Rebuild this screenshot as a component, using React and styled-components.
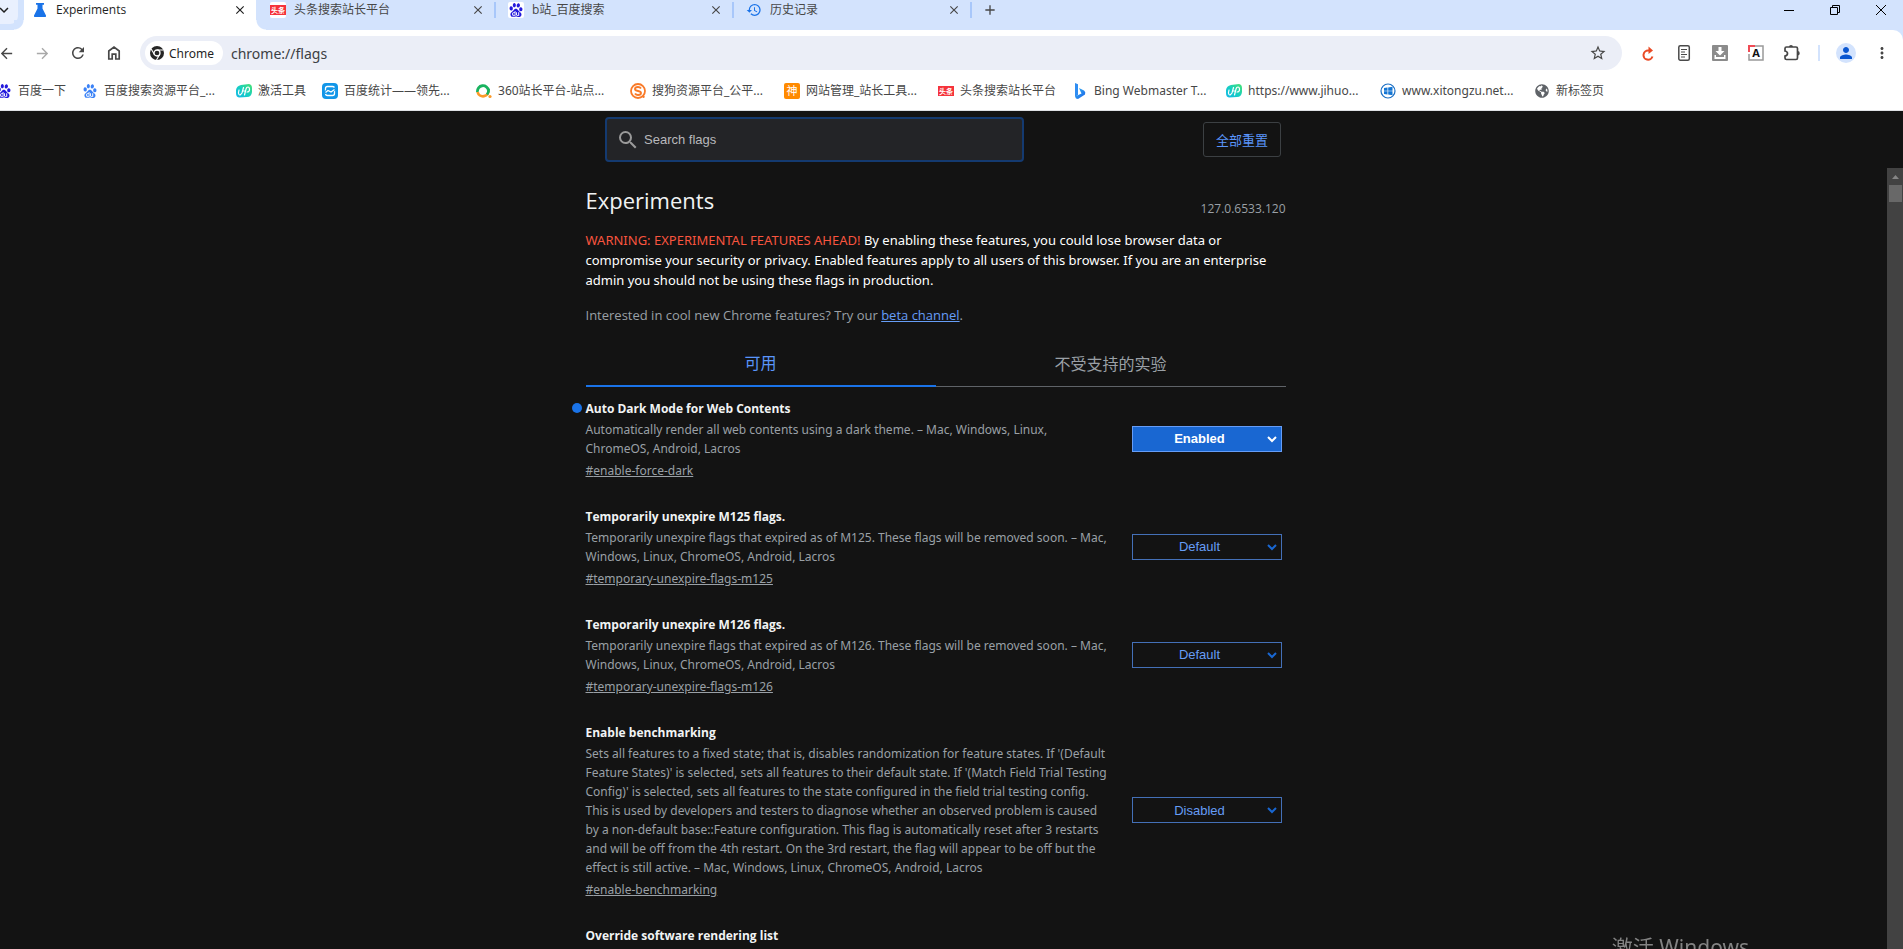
import React, { useState } from 'react';
import styled, { createGlobalStyle } from 'styled-components';
import { SiBaidu } from 'react-icons/si';
import { FaGlobeAmericas } from 'react-icons/fa';
import {
  MdArrowBack,
  MdArrowForward,
  MdClose,
  MdAdd,
  MdHistory,
  MdPerson,
  MdRefresh,
  MdSearch,
  MdStarBorder,
  MdMoreVert,
  MdKeyboardArrowDown,
} from 'react-icons/md';

const colors = {
  strip: '#d3e3fd',
  omnibox: '#ebeef7',
  ink: '#474747',
  page: '#131313',
  text: '#9aa0a6',
  bright: '#ffffff',
  blue: '#1a73e8',
  link: '#669df6',
  warning: '#f9553f',
};

const fonts = {
  body: '"Noto Sans", "Noto Sans CJK SC", sans-serif',
  heading: '"Open Sans", "Noto Sans CJK SC", sans-serif',
  control: '"Liberation Sans", Arial, sans-serif',
};

const GlobalStyle = createGlobalStyle`
  html, body, #root {
    margin: 0;
    padding: 0;
    height: 100%;
  }
  body {
    overflow: hidden;
    background-color: ${colors.page};
    font-family: ${fonts.body};
  }
  *, *::before, *::after {
    box-sizing: border-box;
  }
`

const Browser = styled.div`
  display: flex;
  flex-direction: column;
  height: 100%;
`

/* tab strip */

const TabStrip = styled.div`
  display: flex;
  flex: none;
  height: 30px;
  background-color: ${colors.strip};
  overflow: hidden;
`

const TabSearch = styled.button`
  flex: none;
  width: 18px;
  height: 24px;
  margin-right: 2px;
  padding: 0;
  border: 0;
  border-radius: 0 0 8px 0;
  background-color: #e9f0fe;
  color: #1f1f1f;
  overflow: hidden;
  svg {
    display: block;
    margin: -4px 0 0 -5px;
  }
`

const Tab = styled.div`
  position: relative;
  display: flex;
  flex: none;
  align-items: center;
  width: 238px;
  height: 30px;
  padding: 0 ${props => (props.$active ? '10px' : '0')} 10px 12px;
  color: ${props => (props.$active ? '#1f1f1f' : colors.ink)};
  font-family: ${fonts.heading};
  font-size: 12px;
  line-height: 20px;

  ${props => props.$active && `
    &::before {
      content: '';
      position: absolute;
      inset: 0 2px 0 4px;
      background: #fff;
    }
    &::after {
      content: '';
      position: absolute;
      inset: auto -8px 0 -6px;
      height: 10px;
      background:
        radial-gradient(circle at 0 0, ${colors.strip} 9px, #fff 10px) left / 10px 10px no-repeat,
        radial-gradient(circle at 100% 0, ${colors.strip} 9px, #fff 10px) right / 10px 10px no-repeat;
    }
  `}
  > * {
    position: relative;
    z-index: 1;
  }
`

const TabTitle = styled.span`
  flex: 1;
  margin-left: 8px;
  white-space: nowrap;
`

const Divider = styled.span`
  flex: none;
  width: 2px;
  height: 16px;
  background-color: #a8c7fa;
`

const TabClose = styled.button`
  display: flex;
  flex: none;
  align-items: center;
  justify-content: center;
  width: 16px;
  height: 16px;
  margin-right: ${props => (props.$divided ? '8px' : '0')};
  padding: 0;
  border: 0;
  background: none;
  color: inherit;
`

const NewTab = styled.button`
  display: flex;
  flex: none;
  align-items: center;
  justify-content: center;
  width: 36px;
  height: 20px;
  padding: 0;
  border: 0;
  background: none;
  color: ${colors.ink};
`

const WindowControls = styled.div`
  display: flex;
  margin-left: auto;
  margin-right: -1px;
`

const WindowButton = styled.button`
  width: 46px;
  height: 20px;
  padding: 0;
  border: 0;
  background: none;
  svg {
    display: block;
    margin: 0 auto;
  }
`

/* toolbar */

const ToolbarBack = styled.div`
  flex: none;
  background-color: ${colors.strip};
`

const Toolbar = styled.div`
  display: flex;
  align-items: center;
  height: 46px;
  padding-right: 3px;
  background-color: #fff;
  border-top-right-radius: 10px;
  overflow: hidden;
`

const NavButtons = styled.div`
  display: flex;
  flex: none;
  width: 140px;
`

const ToolButton = styled.button`
  display: flex;
  flex: none;
  align-items: center;
  justify-content: center;
  width: 36px;
  height: 34px;
  padding: 0;
  border: 0;
  background: none;
  color: ${props => (props.$faded ? '#a9a9a9' : colors.ink)};
  &:first-child {
    margin-left: ${props => (props.$edge ? '-12px' : '0')};
  }
`

const Omnibox = styled.div`
  display: flex;
  flex: 1;
  align-items: center;
  height: 34px;
  padding: 0 6px 0 5px;
  border-radius: 17px;
  background-color: ${colors.omnibox};
`

const SiteChip = styled.button`
  display: flex;
  flex: none;
  align-items: center;
  gap: 5px;
  width: 78px;
  height: 24px;
  padding: 0 5px;
  border: 0;
  border-radius: 12px;
  background-color: #fff;
  color: #1f1f1f;
  font: 12px ${fonts.body};
`

const Address = styled.input`
  flex: 1;
  height: 24px;
  margin-left: 8px;
  padding: 0;
  border: 0;
  outline: 0;
  background: none;
  color: #3c4043;
  font: 14px ${fonts.body};
`

const Extensions = styled.div`
  display: flex;
  flex: none;
  align-items: center;
  padding-left: 8px;
`

const ToolDivider = styled.span`
  width: 2px;
  height: 16px;
  margin: 0 8px;
  background-color: ${colors.strip};
`

const Avatar = styled.span`
  display: flex;
  align-items: center;
  justify-content: center;
  width: 20px;
  height: 20px;
  border-radius: 50%;
  background-color: ${colors.strip};
  color: #0b57d0;
`

/* bookmarks */

const Bookmarks = styled.nav`
  display: flex;
  flex: none;
  gap: 16px;
  height: 35px;
  padding-bottom: 5px;
  background-color: #fff;
  border-bottom: 1px solid #dfe1e5;
  overflow: hidden;
`

const Bookmark = styled.a`
  display: flex;
  flex: none;
  align-items: center;
  gap: 6px;
  color: ${colors.ink};
  font-size: 12px;
  line-height: 20px;
  text-decoration: none;
  white-space: nowrap;
  &:first-child {
    margin-left: -4px;
  }
`

const BookmarkIcon = styled.span`
  display: flex;
  align-items: center;
  justify-content: center;
  width: 16px;
  height: 16px;
`

const BookmarkName = styled.span`
  width: ${props => (props.$cut ? '116px' : 'auto')};
`

/* flags page */

const FlagsHeader = styled.header`
  flex: none;
  height: 57px;
  padding-right: 17px;
`

const HeaderInner = styled.div`
  display: flex;
  align-items: center;
  justify-content: space-between;
  max-width: 700px;
  height: 57px;
  margin: 0 auto;
  padding: 0 12px;
`

const SearchBox = styled.label`
  display: flex;
  align-items: center;
  width: 419px;
  height: 45px;
  padding-left: 9px;
  border: 2px solid #143a70;
  border-radius: 4px;
  background-color: #232427;
  color: #9a9a9a;
`

const SearchInput = styled.input`
  flex: 1;
  margin-left: 4px;
  padding: 0;
  border: 0;
  outline: 0;
  background: none;
  color: #fff;
  font: 13px ${fonts.control};
  &::placeholder {
    color: #b8b9bc;
  }
`

const ResetButton = styled.button`
  width: 78px;
  height: 35px;
  padding: 0 0 1px;
  border: 1px solid #3c4043;
  border-radius: 3px;
  background: none;
  color: #5a95fb;
  font: 13px "Noto Sans CJK SC", sans-serif;
`

const ScrollArea = styled.div`
  display: flex;
  flex: 1;
  min-height: 0;
`

const Main = styled.main`
  flex: 1;
  padding: 0 16px 0 0;
  overflow: hidden;
`

const Content = styled.div`
  max-width: 700px;
  margin: 0 auto;
  padding-top: 15px;
`

const TitleRow = styled.div`
  display: flex;
  align-items: flex-end;
  justify-content: space-between;
`

const Title = styled.h1`
  margin: 0;
  color: #f1f3f4;
  font-family: ${fonts.heading};
  font-size: 22px;
  font-weight: 400;
  line-height: 34px;
`

const Version = styled.span`
  color: ${colors.text};
  font-family: ${fonts.heading};
  font-size: 12px;
  line-height: 16px;
`

const Blurb = styled.p`
  margin: 13px 0 15px;
  color: ${props => (props.$dim ? colors.text : colors.bright)};
  font-family: ${props => (props.$dim ? fonts.heading : fonts.body)};
  font-size: 13px;
  line-height: 20px;
`

const Warning = styled.span`
  color: ${colors.warning};
`

const BetaLink = styled.a`
  color: #669df6;
`

const TabList = styled.div`
  display: grid;
  grid-template-columns: 1fr 1fr;
  margin-top: 17px;
`

const FlagTab = styled.button`
  height: 45px;
  padding: 0 0 3px;
  border: 0;
  border-bottom: ${props => (props.$selected ? `2px solid ${colors.blue}` : '1px solid #5f6368')};
  background: none;
  color: ${props => (props.$selected ? '#5a95fb' : colors.text)};
  font: 16px "Noto Sans CJK SC", sans-serif;
`

const Experiment = styled.section`
  display: flex;
  align-items: center;
  justify-content: space-between;
  padding: 12px 4px 15px 0;
`

const ExperimentText = styled.div`
  width: 526px;
  color: ${colors.text};
  font-size: 12px;
  line-height: 19px;
`

const ExperimentName = styled.h2`
  position: relative;
  margin: 0 0 2px;
  color: #f1f3f4;
  font-family: ${fonts.heading};
  font-size: 12px;
  font-weight: 700;
  line-height: 19px;
  ${props => props.$changed && `
    &::before {
      content: '';
      position: absolute;
      top: 4px;
      left: -14px;
      width: 10px;
      height: 10px;
      border-radius: 50%;
      background: ${colors.blue};
    }
  `}
`

const Description = styled.p`
  margin: 0 0 3px;
`

const Permalink = styled.a`
  color: inherit;
`

const SelectWrap = styled.div`
  position: relative;
  flex: none;
  margin-bottom: 2px;
  color: ${props => (props.$changed ? '#fff' : '#1967d2')};
  svg {
    position: absolute;
    top: 10px;
    right: 5px;
    pointer-events: none;
  }
`

const StateSelect = styled.select`
  display: block;
  width: 150px;
  height: 26px;
  padding: 0 14px 0 0;
  appearance: none;
  border: 1px solid ${props => (props.$changed ? colors.link : '#4470b8')};
  border-radius: 0;
  background-color: ${props => (props.$changed ? '#1967d2' : colors.page)};
  color: ${props => (props.$changed ? '#fff' : colors.link)};
  font: ${props => (props.$changed ? '700' : '400')} 13px ${fonts.control};
  text-align: center;
  text-align-last: center;
`

const Scrollbar = styled.div`
  flex: none;
  width: 16px;
  padding: 0 1px 0 2px;
  background-color: #424242;
`

const ScrollUp = styled.div`
  display: flex;
  align-items: center;
  justify-content: center;
  height: 17px;
`

const ScrollThumb = styled.div`
  height: 17px;
  background-color: #686868;
`

const Watermark = styled.div`
  position: fixed;
  right: 154px;
  bottom: -13px;
  color: #838383;
  font-size: 21px;
  line-height: 30px;
  pointer-events: none;
`

/* icons */

const FlaskIcon = () => (
  <svg width="16" height="16" viewBox="0 0 16 16">
    <path fill="#1a73e8" d="M4 1V2.800H5.500V6.500L2 13.500Q1.500 15 3 15H13Q14.500 15 14 13.500L10.500 6.500V2.800H12V1Z" />
  </svg>
)

const ToutiaoIcon = () => (
  <svg width="16" height="16" viewBox="0 0 16 16">
    <rect width="16" height="16" rx="2" fill="#fff" />
    <rect y="3" width="16" height="10" fill="#f5333b" />
    <text x="8" y="11" fill="#fff" fontSize="7" fontWeight="700" textAnchor="middle" fontFamily="Noto Sans CJK SC">头条</text>
  </svg>
)

const BaiduTile = styled.span`
  display: flex;
  align-items: center;
  justify-content: center;
  width: 16px;
  height: 16px;
  border-radius: 2px;
  background: #fff;
`

const LinkBadge = () => (
  <svg width="16" height="16" viewBox="0 0 16 16">
    <defs>
      <linearGradient id="badge" x1="1" y1="0" x2="0" y2="1">
        <stop offset="0" stopColor="#4be36f" />
        <stop offset=".5" stopColor="#16cfc0" />
        <stop offset="1" stopColor="#13b7ea" />
      </linearGradient>
    </defs>
    <path fill="url(#badge)" d="M5 2L13 1Q16 1.500 16 5V9Q15.500 14 11 14L3 14.500Q0 14 0 10V7Q.5 3 5 2Z" />
    <path d="M3 7Q2 10 3 11.500T6 10L7.500 4.500M6.800 8H9.500M8.500 12L10 6Q10.500 4 12 4T13.500 6.500T11 9" fill="none" stroke="#fff" strokeWidth="1.200" strokeLinecap="round" />
  </svg>
)

const TongjiIcon = () => (
  <svg width="16" height="16" viewBox="0 0 16 16">
    <rect width="16" height="16" rx="4" fill="#1296e8" />
    <rect x="3.500" y="3.500" width="9" height="9" rx="2" fill="none" stroke="#fff" strokeWidth="1.300" />
    <path d="M2.500 10L6 7.500L8.500 9L13.500 5.500" fill="none" stroke="#1296e8" strokeWidth="3" />
    <path d="M3.500 9.500L6 7.500L9 9L12.500 6.500" fill="none" stroke="#fff" strokeWidth="1.300" />
  </svg>
)

const SearchRingIcon = () => (
  <svg width="16" height="16" viewBox="0 0 16 16" fill="none">
    <path d="M1.500 9A5.500 5.500 0 1 1 12.500 7.500" stroke="#19b35f" strokeWidth="2.800" />
    <path d="M12.600 7A5.600 5.600 0 0 1 1.600 9" stroke="#fd9a28" strokeWidth="2.800" />
    <path d="M12.600 6Q13 9 11 11.500" stroke="#19b35f" strokeWidth="2.800" />
    <circle cx="14" cy="13.500" r="1.600" fill="#fd9a28" />
  </svg>
)

const SogouIcon = () => (
  <svg width="16" height="16" viewBox="0 0 16 16">
    <circle cx="8" cy="8" r="7" fill="none" stroke="#f97a28" strokeWidth="1.800" />
    <path d="M11 5.500Q10 4 8 4Q5 4 5 6Q5 7.500 8 8T11 10Q11 12 8 12Q6 12 5 10.500" fill="none" stroke="#f97a28" strokeWidth="1.900" />
    <circle cx="13.500" cy="13.800" r="1.200" fill="#f97a28" />
  </svg>
)

const ShenIcon = () => (
  <svg width="16" height="16" viewBox="0 0 16 16">
    <rect width="16" height="16" rx="2" fill="#ff8a00" />
    <text x="8" y="12" fill="#fff" fontSize="11" textAnchor="middle" fontFamily="Noto Sans CJK SC">神</text>
  </svg>
)

const BingIcon = () => (
  <svg width="16" height="16" viewBox="0 0 16 16">
    <defs>
      <linearGradient id="bing" x1="0" y1="0" x2="1" y2="1">
        <stop offset="0" stopColor="#35b8f5" />
        <stop offset="1" stopColor="#1a5ee6" />
      </linearGradient>
    </defs>
    <path fill="#2f8df2" d="M3 0L6 1.300V12L3 14Z" />
    <path fill="url(#bing)" d="M7 5L12 7.500Q14 9 13 11.500L6 16Q3.500 16 3 13.500L9.500 10.500L8.300 8Z" />
  </svg>
)

const WindowsIcon = () => (
  <svg width="16" height="16" viewBox="0 0 16 16">
    <circle cx="8" cy="8" r="7" fill="none" stroke="#1b6fc4" strokeWidth="1.200" />
    <path fill="#1476d4" d="M4 5L7.500 4.500V7.700H4ZM8.200 4.400L12.500 3.800V7.700H8.200ZM4 8.300H7.500V11.500L4 11ZM8.200 8.300H12.500V12.200L8.200 11.600Z" />
  </svg>
)

const ChromeIcon = () => (
  <svg width="14" height="14" viewBox="0 0 14 14">
    <circle cx="7" cy="7" r="7" fill="#262626" />
    <path d="M7 4H13.500M4.400 8.500L1.200 3M9.600 8.500L6.500 14" stroke="#fff" strokeWidth="1.100" />
    <circle cx="7" cy="7" r="3" fill="#262626" stroke="#fff" strokeWidth="1.300" />
  </svg>
)

const HomeIcon = () => (
  <svg width="14" height="16" viewBox="0 0 14 16" fill="none" stroke="currentColor" strokeWidth="1.700">
    <path d="M1.800 14V6L7 2L12.200 6V14H8.800V9.200H5.200V14Z" />
  </svg>
)

const RedoIcon = () => (
  <svg width="16" height="16" viewBox="0 0 16 16" fill="none" stroke="#ea4a25" strokeWidth="2">
    <path d="M12.500 11.500A4.600 4.600 0 1 1 8.500 5.500H10" />
    <path fill="#ea4a25" stroke="none" d="M8.500 1.500L13 5.500L8.500 9Z" />
  </svg>
)

const ReaderIcon = () => (
  <svg width="16" height="16" viewBox="0 0 16 16" fill="none" stroke="#4a4a4a">
    <rect x="2.800" y=".8" width="10.500" height="14.400" rx="1.500" strokeWidth="1.500" />
    <path d="M5 4.500H11M5 7H9M5 9.500H11M5 12H9" strokeWidth="1.200" />
  </svg>
)

const DownloadIcon = () => (
  <svg width="16" height="16" viewBox="0 0 16 16">
    <rect width="16" height="16" rx="1" fill="#8b8b8b" />
    <path fill="#fff" d="M6.500 2H9.500V6H12.500L8 10.500L3.500 6H6.500ZM2.500 10H4V12H12V10H13.500V14H2.500Z" />
  </svg>
)

const LetterIcon = () => (
  <svg width="16" height="16" viewBox="0 0 16 16">
    <path d="M6 1H15V15H1V9" fill="none" stroke="#999" strokeWidth="1.500" />
    <path d="M1 7V1H7" fill="none" stroke="#f04b55" strokeWidth="2" />
    <text x="8" y="12" fill="#111" fontSize="11" fontWeight="700" textAnchor="middle" fontFamily="Open Sans">A</text>
  </svg>
)

const PuzzleIcon = () => (
  <svg width="18" height="18" viewBox="0 0 18 18" fill="none" stroke="#474747" strokeWidth="1.700">
    <path d="M2 4.500Q2 3 3.500 3H13Q14.500 3 14.500 4.500V14Q14.500 15.500 13 15.500H3.500Q2 15.500 2 14V12Q4.500 11.500 4.500 9.500T2 7Z" />
    <path d="M6 3A2 2 0 0 1 10 3M14.500 7A2 2 0 0 1 14.500 11.500" fill="#474747" stroke="none" />
  </svg>
)

const Chevron = () => (
  <svg width="10" height="7" viewBox="0 0 10 7" fill="none" stroke="currentColor" strokeWidth="2">
    <path d="M1 1L5 5L9 1" />
  </svg>
)

const TABS = [
  { title: 'Experiments', icon: <FlaskIcon />, active: true },
  { title: '头条搜索站长平台', icon: <ToutiaoIcon /> },
  { title: 'b站_百度搜索', icon: <BaiduTile><SiBaidu size={14} color="#2319dc" /></BaiduTile> },
  { title: '历史记录', icon: <MdHistory size={16} color="#1a73e8" /> },
]

const BOOKMARKS = [
  { name: '百度一下', icon: <SiBaidu size={14} color="#2319dc" /> },
  { name: '百度搜索资源平台_...', icon: <SiBaidu size={14} color="#3b82f6" />, cut: true },
  { name: '激活工具', icon: <LinkBadge /> },
  { name: '百度统计——领先...', icon: <TongjiIcon />, cut: true },
  { name: '360站长平台-站点...', icon: <SearchRingIcon />, cut: true },
  { name: '搜狗资源平台_公平...', icon: <SogouIcon />, cut: true },
  { name: '网站管理_站长工具...', icon: <ShenIcon />, cut: true },
  { name: '头条搜索站长平台', icon: <ToutiaoIcon /> },
  { name: 'Bing Webmaster T...', icon: <BingIcon />, cut: true },
  { name: 'https://www.jihuo...', icon: <LinkBadge />, cut: true },
  { name: 'www.xitongzu.net...', icon: <WindowsIcon />, cut: true },
  { name: '新标签页', icon: <FaGlobeAmericas size={14} color="#5f6368" /> },
]

const EXPERIMENTS = [
  {
    id: 'enable-force-dark',
    name: 'Auto Dark Mode for Web Contents',
    text: 'Automatically render all web contents using a dark theme. – Mac, Windows, Linux, ChromeOS, Android, Lacros',
    state: 'Enabled',
    changed: true,
  },
  {
    id: 'temporary-unexpire-flags-m125',
    name: 'Temporarily unexpire M125 flags.',
    text: 'Temporarily unexpire flags that expired as of M125. These flags will be removed soon. – Mac, Windows, Linux, ChromeOS, Android, Lacros',
    state: 'Default',
  },
  {
    id: 'temporary-unexpire-flags-m126',
    name: 'Temporarily unexpire M126 flags.',
    text: 'Temporarily unexpire flags that expired as of M126. These flags will be removed soon. – Mac, Windows, Linux, ChromeOS, Android, Lacros',
    state: 'Default',
  },
  {
    id: 'enable-benchmarking',
    name: 'Enable benchmarking',
    text: "Sets all features to a fixed state; that is, disables randomization for feature states. If '(Default Feature States)' is selected, sets all features to their default state. If '(Match Field Trial Testing Config)' is selected, sets all features to the state configured in the field trial testing config. This is used by developers and testers to diagnose whether an observed problem is caused by a non-default base::Feature configuration. This flag is automatically reset after 3 restarts and will be off from the 4th restart. On the 3rd restart, the flag will appear to be off but the effect is still active. – Mac, Windows, Linux, ChromeOS, Android, Lacros",
    state: 'Disabled',
  },
]

function ExperimentRow({ id, name, text, state, changed }) {
  const [value, setValue] = useState(state);
  return (
    <Experiment>
      <ExperimentText>
        <ExperimentName id={`${id}-name`} $changed={changed}>{name}</ExperimentName>
        <Description>{text}</Description>
        <Permalink href={`#${id}`}>#{id}</Permalink>
      </ExperimentText>
      <SelectWrap $changed={changed}>
        <StateSelect
          aria-labelledby={`${id}-name`}
          value={value}
          onChange={e => setValue(e.target.value)}
          $changed={changed}
        >
          <option>Default</option>
          <option>Enabled</option>
          <option>Disabled</option>
        </StateSelect>
        <Chevron />
      </SelectWrap>
    </Experiment>
  );
}

function App() {
  return (
    <Browser>
      <GlobalStyle />
      <TabStrip>
        <TabSearch aria-label="Search tabs"><MdKeyboardArrowDown size={18} /></TabSearch>
        {TABS.map((tab, i) => (
          <Tab key={tab.title} $active={tab.active}>
            {tab.icon}
            <TabTitle>{tab.title}</TabTitle>
            <TabClose aria-label="Close tab" $divided={i > 0}><MdClose size={14} /></TabClose>
            {i > 0 && <Divider />}
          </Tab>
        ))}
        <NewTab aria-label="New tab"><MdAdd size={16} /></NewTab>
        <WindowControls>
          <WindowButton aria-label="Minimize">
            <svg width="10" height="10" viewBox="0 0 10 10"><path d="M0 5.500H10" stroke="#000" /></svg>
          </WindowButton>
          <WindowButton aria-label="Restore">
            <svg width="10" height="10" viewBox="0 0 10 10" fill="none" stroke="#000">
              <path d="M.5 2.500H7.500V9.500H.5ZM2.500 2.500V.5H9.500V7.500H7.500" />
            </svg>
          </WindowButton>
          <WindowButton aria-label="Close">
            <svg width="10" height="10" viewBox="0 0 10 10" stroke="#000"><path d="M0 0L10 10M10 0L0 10" /></svg>
          </WindowButton>
        </WindowControls>
      </TabStrip>

      <ToolbarBack>
        <Toolbar>
          <NavButtons>
            <ToolButton $edge aria-label="Back"><MdArrowBack size={17} /></ToolButton>
            <ToolButton $faded aria-label="Forward"><MdArrowForward size={17} /></ToolButton>
            <ToolButton aria-label="Reload"><MdRefresh size={18} /></ToolButton>
            <ToolButton aria-label="Home"><HomeIcon /></ToolButton>
          </NavButtons>
          <Omnibox>
            <SiteChip><ChromeIcon />Chrome</SiteChip>
            <Address aria-label="Address" defaultValue="chrome://flags" />
            <ToolButton aria-label="Bookmark"><MdStarBorder size={18} /></ToolButton>
          </Omnibox>
          <Extensions>
            <ToolButton aria-label="Redo"><RedoIcon /></ToolButton>
            <ToolButton aria-label="Reader"><ReaderIcon /></ToolButton>
            <ToolButton aria-label="Downloads"><DownloadIcon /></ToolButton>
            <ToolButton aria-label="Translate"><LetterIcon /></ToolButton>
            <ToolButton aria-label="Extensions"><PuzzleIcon /></ToolButton>
            <ToolDivider />
            <ToolButton aria-label="Profile"><Avatar><MdPerson size={18} /></Avatar></ToolButton>
            <ToolButton aria-label="Menu"><MdMoreVert size={18} /></ToolButton>
          </Extensions>
        </Toolbar>
      </ToolbarBack>

      <Bookmarks>
        {BOOKMARKS.map(b => (
          <Bookmark key={b.name} href="#">
            <BookmarkIcon>{b.icon}</BookmarkIcon>
            <BookmarkName $cut={b.cut}>{b.name}</BookmarkName>
          </Bookmark>
        ))}
      </Bookmarks>

      <FlagsHeader>
        <HeaderInner>
          <SearchBox>
            <MdSearch size={24} />
            <SearchInput aria-label="Search flags" placeholder="Search flags" />
          </SearchBox>
          <ResetButton>全部重置</ResetButton>
        </HeaderInner>
      </FlagsHeader>

      <ScrollArea>
        <Main>
          <Content>
            <TitleRow>
              <Title>Experiments</Title>
              <Version>127.0.6533.120</Version>
            </TitleRow>
            <Blurb>
              <Warning>WARNING: EXPERIMENTAL FEATURES AHEAD!</Warning> By enabling these features, you could
              lose browser data or compromise your security or privacy. Enabled features apply to all users
              of this browser. If you are an enterprise admin you should not be using these flags in production.
            </Blurb>
            <Blurb $dim>
              Interested in cool new Chrome features? Try our <BetaLink href="#beta">beta channel</BetaLink>.
            </Blurb>
            <TabList role="tablist">
              <FlagTab role="tab" aria-selected="true" $selected>可用</FlagTab>
              <FlagTab role="tab" aria-selected="false">不受支持的实验</FlagTab>
            </TabList>
            {EXPERIMENTS.map(e => <ExperimentRow key={e.id} {...e} />)}
            <Experiment>
              <ExperimentName>Override software rendering list</ExperimentName>
            </Experiment>
          </Content>
        </Main>
        <Scrollbar>
          <ScrollUp>
            <svg width="7" height="4" viewBox="0 0 7 4"><path fill="#868686" d="M0 4L3.500 0L7 4Z" /></svg>
          </ScrollUp>
          <ScrollThumb />
        </Scrollbar>
      </ScrollArea>

      <Watermark>激活 Windows</Watermark>
    </Browser>
  );
}

export default App;
